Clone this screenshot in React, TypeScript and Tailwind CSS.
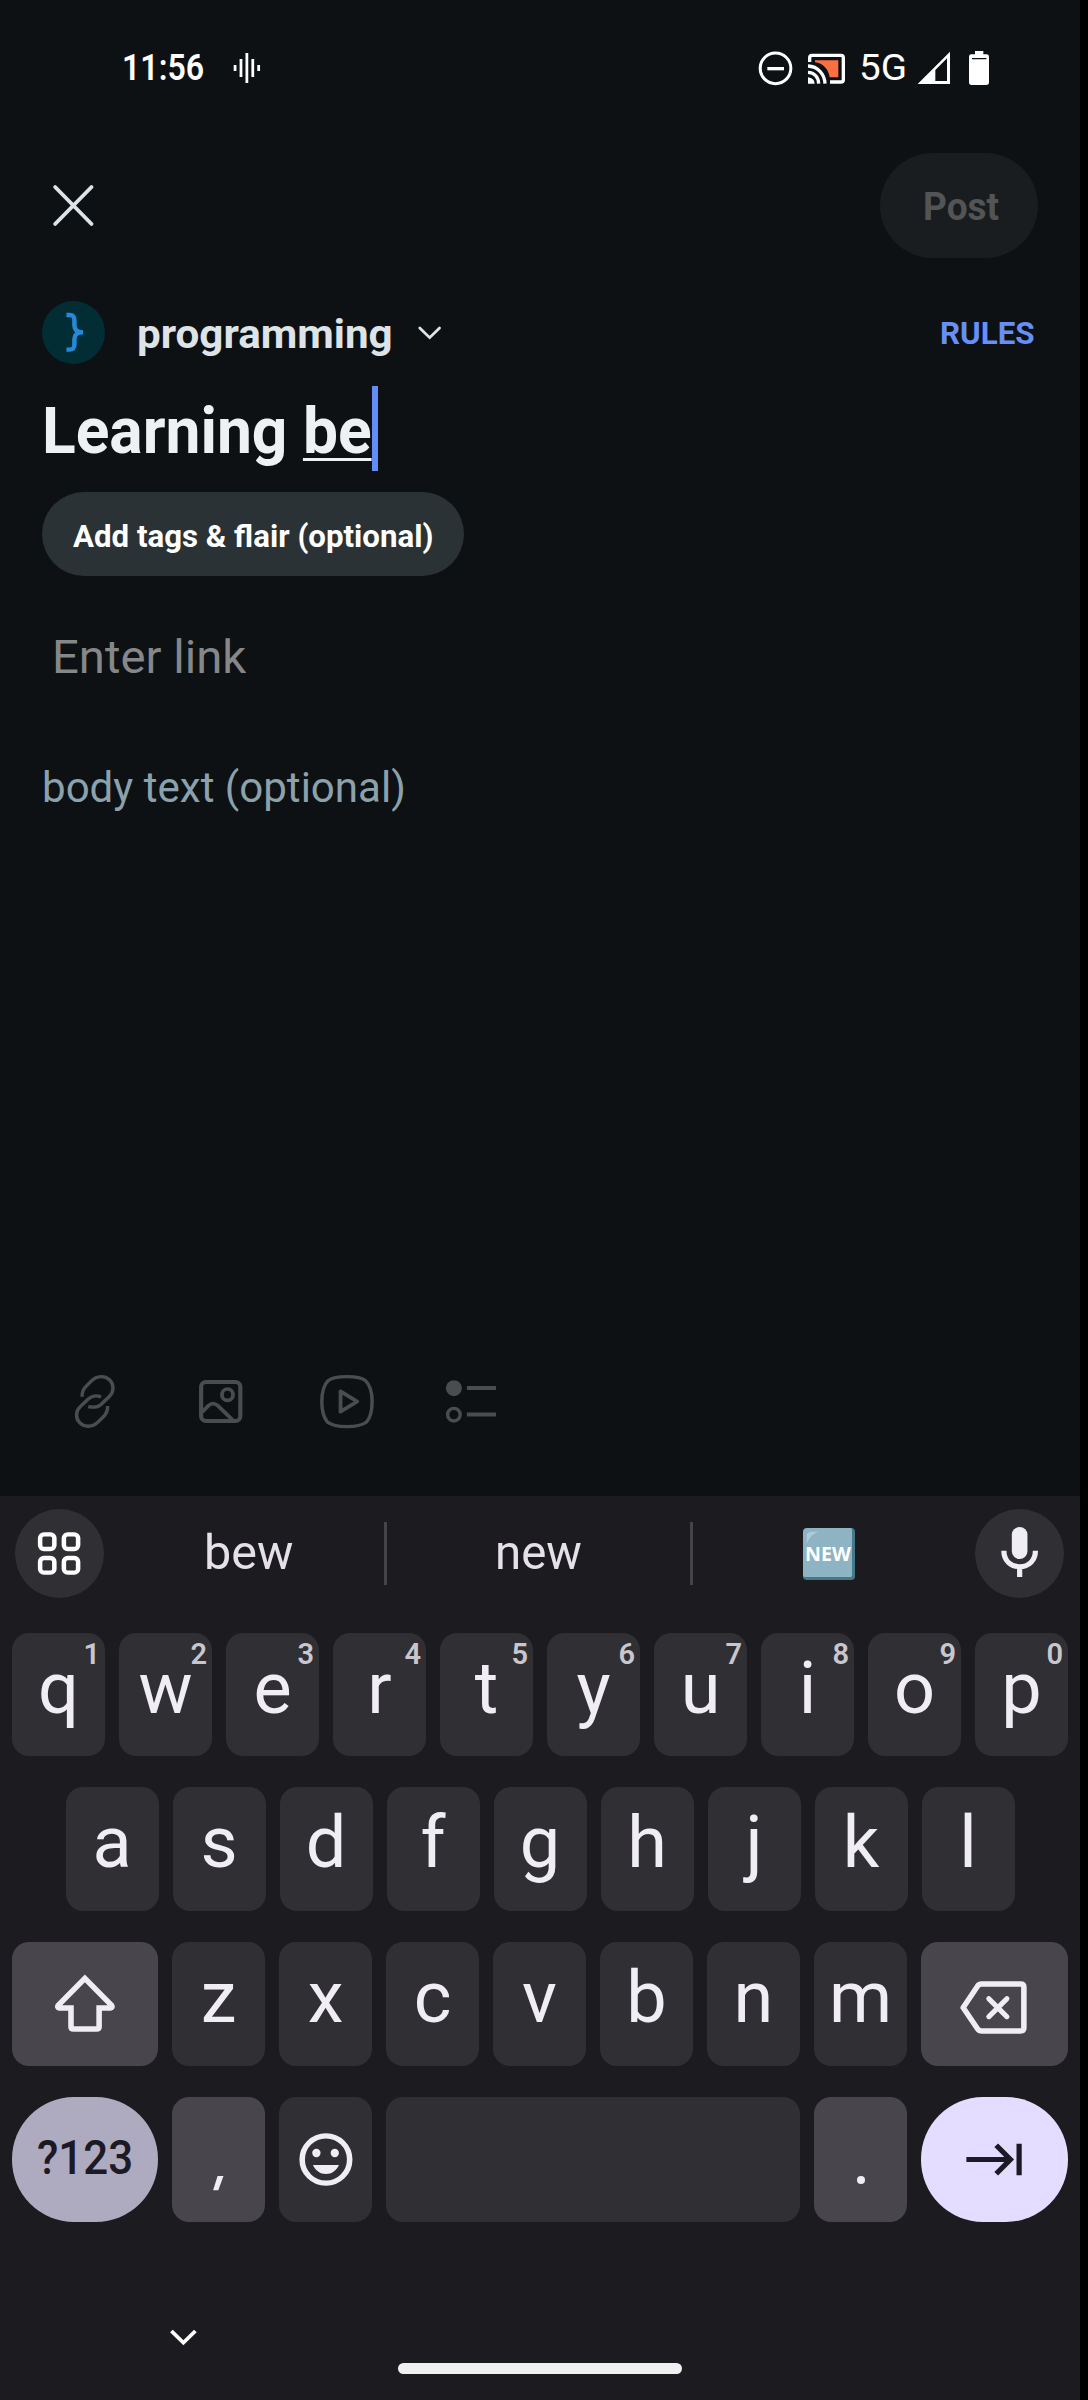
import React, { useLayoutEffect, useRef, useState } from "react";

const cx = (...parts: (string | undefined)[]) => parts.filter(Boolean).join(" ");

/** Single line of text scaled horizontally to fill exactly `w` pixels. */
function Fit({ w, className, children }: { w: number; className?: string; children: React.ReactNode }) {
  const ref = useRef<HTMLSpanElement>(null);
  const [scale, setScale] = useState(1);
  useLayoutEffect(() => {
    const measure = () => {
      const natural = ref.current?.offsetWidth;
      if (natural) setScale(w / natural);
    };
    measure();
    document.fonts?.ready.then(measure);
  }, [w]);
  return (
    <span className={cx("block shrink-0 whitespace-nowrap", className)} style={{ width: w }}>
      <span ref={ref} className="inline-block origin-left" style={{ transform: `scaleX(${scale})` }}>
        {children}
      </span>
    </span>
  );
}

/** Icon on a fine grid: three units per pixel down, `ux` units per pixel across. */
function Icon({ box, ux = 2.882, className, children }: { box: [number, number, number, number]; ux?: number; className?: string; children: React.ReactNode }) {
  return (
    <svg
      viewBox={box.join(" ")}
      width={box[2] / ux}
      height={box[3] / 3}
      preserveAspectRatio="none"
      fill="none"
      stroke="currentColor"
      className={cx("block shrink-0", className)}
    >
      {children}
    </svg>
  );
}

function StatusBar() {
  return (
    <div className="flex h-[136px] shrink-0 items-center pl-[122px] text-white">
      <Fit w={82} className="text-[36px] leading-[40px] font-semibold">11:56</Fit>
      <Icon box={[672, 156, 81, 96]} className="ml-[29px]">
        <path d="M678 195v18M695 177v54M712 159v90M729 177v54M746 195v18" strokeWidth="8" />
      </Icon>
      <Icon ux={3} box={[171, 150, 105, 105]} className="ml-[497px]">
        <ellipse cx="223.500" cy="202" rx="46" ry="46" strokeWidth="9" />
        <path d="M199 203h50" strokeWidth="10" />
      </Icon>
      <Icon ux={3} box={[318, 150, 117, 102]} className="ml-[14px]">
        <path d="M342 178H412V229H386C383 206 366 186 342 184Z" fill="#fb7043" stroke="none" />
        <path d="M326 183V170Q326 163 333 163H420Q427 163 427 170V236Q427 243 420 243H387" strokeWidth="10" />
        <path d="M321 229Q340 231 341 248H321Z" fill="currentColor" stroke="none" />
        <path d="M321 214C340 215 352 228 353 248M321 195C350 196 371 219 372 248" strokeWidth="10" />
      </Icon>
      <Fit w={48} className="ml-[13px] text-[37px] leading-[40px]">5G</Fit>
      <Icon ux={3} box={[648, 150, 102, 102]} className="ml-[10px]">
        <path d="M650 249L747 152V249ZM703 207V240H738V172Z" fill="currentColor" fillRule="evenodd" stroke="none" />
      </Icon>
      <Icon ux={3} box={[801, 150, 66, 105]} className="ml-[17px]">
        <path d="M822 150H847V160H857Q864 160 864 167V244Q864 252 856 252H812Q804 252 804 244V167Q804 160 811 160H822ZM813 171V175H856V171Z" fill="currentColor" fillRule="evenodd" stroke="none" />
      </Icon>
    </div>
  );
}

function TopBar() {
  return (
    <div className="flex h-[141px] shrink-0 items-start justify-between pt-[17px] pr-[42px] pl-[52px]">
      <Icon box={[150, 552, 124, 130]} className="mt-[31px] text-[#dde3e7]">
        <path d="M159 561L264 672M264 561L159 672" strokeWidth="11" strokeLinecap="round" />
      </Icon>
      <div className="flex h-[105px] w-[158px] items-center justify-center rounded-full bg-[#1a1d1f]">
        <Fit w={76} className="mt-[2px] ml-[3px] text-[38px] leading-[44px] font-bold text-[#525456]">Post</Fit>
      </div>
    </div>
  );
}

function Community() {
  return (
    <div className="flex h-[109px] shrink-0 items-start pt-[24px]">
      <div className="flex size-[63px] items-center justify-center rounded-full bg-[#022d35]">
        <Icon box={[183, 936, 60, 121]} className="ml-[2px]">
          <path d="M190 945H199C211 945 213 951 213 962V976C213 989 219 997 238 997C219 997 213 1005 213 1018V1032C213 1044 211 1049 199 1049H190" stroke="#2489d8" strokeWidth="13" />
        </Icon>
      </div>
      <Fit w={256} className="ml-[32px] text-[41px] leading-[67px] font-bold text-[#dde3e7]">programming</Fit>
      <Icon box={[1200, 975, 72, 48]} className="mt-[24px] ml-[24px] text-[#dde3e7]">
        <path d="M1208 984L1236.500 1013L1265 984" strokeWidth="8" strokeLinecap="round" />
      </Icon>
      <Fit w={95} className="mr-[5px] ml-auto text-[32px] leading-[65px] font-bold text-[#688ff6]">RULES</Fit>
    </div>
  );
}

function Composer() {
  return (
    <div className="flex flex-1 flex-col pr-[40px] pl-[42px]">
      <Community />
      <div className="flex h-[85px] shrink-0">
        <Fit w={330} className="text-[64px] leading-[92px] font-bold text-[#eef1f3]">
          Learning{" "}
          <span className="underline decoration-[3px] underline-offset-[5px] [text-decoration-skip-ink:none]">be</span>
        </Fit>
        <div className="h-[85px] w-[6px] bg-[#648cf6]" />
      </div>
      <div className="mt-[21px] flex h-[84px] w-[422px] shrink-0 items-center rounded-full bg-[#2a3235] pl-[31px]">
        <Fit w={360} className="mt-[4px] text-[32px] leading-[40px] font-bold text-white">Add tags &amp; flair (optional)</Fit>
      </div>
      <Fit w={194} className="mt-[51px] ml-[10px] text-[47px] leading-[60px] text-[#858788]">Enter link</Fit>
      <Fit w={364} className="mt-[70px] text-[43px] leading-[60px] text-[#8ba2ad]">body text (optional)</Fit>
    </div>
  );
}

function Attachments() {
  return (
    <div className="flex h-[188px] shrink-0 items-start pl-[73px] text-[#4a4d4f]">
      <Icon box={[210, 99, 126, 171]} className="mt-[65px]">
        <path d="M236 170C236 156 239 148 247 140L264 122C278 107 301 106 315 119C329 134 328 154 316 168L290 194C280 203 268 203 254 200" strokeWidth="10" />
        <path d="M291 171C277 165 264 168 254 177L231 200C217 214 217 235 229 248C242 262 264 262 278 250L297 231C307 221 310 212 310 198" strokeWidth="10" />
      </Icon>
      <Icon box={[570, 114, 132, 141]} className="mt-[70px] ml-[81px]">
        <rect x="579" y="126" width="113" height="117" rx="14" strokeWidth="12" />
        <ellipse cx="655" cy="164" rx="16" ry="17" strokeWidth="11" />
        <path d="M582 216L600 197Q613 185 627 197L673 243" strokeWidth="11" />
      </Icon>
      <Icon box={[915, 99, 168, 171]} className="mt-[65px] ml-[74px]">
        <path d="M998 110C1020 110 1042 113 1052 122C1068 138 1071 160 1071 185C1071 210 1068 230 1055 246C1042 256 1020 260 998 260C976 260 955 257 942 246C930 230 926 210 926 185C926 160 929 138 944 122C955 113 976 110 998 110Z" strokeWidth="10" />
        <path d="M980 154L1028 184.500L980 215Z" strokeWidth="11" strokeLinejoin="round" />
      </Icon>
      <Icon box={[1280, 114, 156, 141]} className="mt-[70px] ml-[68px]">
        <ellipse cx="1308.500" cy="144.500" rx="23" ry="24" fill="currentColor" stroke="none" />
        <ellipse cx="1308.500" cy="224" rx="18" ry="19" strokeWidth="10" />
        <path d="M1346 144H1430M1346 223.500H1430" strokeWidth="12" />
      </Icon>
    </div>
  );
}

function Suggestions() {
  return (
    <div className="flex h-[137px] shrink-0 items-start pt-[13px] pl-[15px]">
      <div className="flex size-[89px] items-center justify-center rounded-full bg-[#303034] text-white">
        <Icon box={[108, 573, 128, 135]}>
          <rect x="117" y="583" width="41" height="44" rx="11" strokeWidth="13" />
          <rect x="185.500" y="583" width="41" height="44" rx="11" strokeWidth="13" />
          <rect x="117" y="654" width="41" height="44" rx="11" strokeWidth="13" />
          <rect x="185.500" y="654" width="41" height="44" rx="11" strokeWidth="13" />
        </Icon>
      </div>
      <Fit w={89} className="ml-[100px] text-[49px] leading-[88px] text-[#e6e1e8]">bew</Fit>
      <div className="mt-[13px] ml-[91px] h-[63px] w-[3px] bg-[#454448]" />
      <Fit w={87} className="ml-[108px] text-[49px] leading-[88px] text-[#e6e1e8]">new</Fit>
      <div className="mt-[13px] ml-[108px] h-[63px] w-[3px] bg-[#454448]" />
      <div className="relative mt-[19px] ml-[110px] flex size-[52px] items-center justify-center rounded-[4px] border-r-[3px] border-b-[3px] border-[#45798a] bg-[#8eb3c3]">
        <Icon ux={3} box={[0, 0, 40, 40]} className="absolute top-[3px] left-[3px]">
          <path d="M2 38V16Q2 2 16 2H38Q12 10 2 38Z" fill="#aecbd7" stroke="none" />
        </Icon>
        <Fit w={46} className="relative mt-[2px] font-['Open_Sans'] text-[20px] leading-[26px] font-bold text-white">NEW</Fit>
      </div>
      <div className="ml-[120px] flex size-[89px] items-start justify-center rounded-full bg-[#303034] text-[#f1edf5]">
        <Icon box={[1311, 138, 120, 156]} className="mt-[17px]">
          <rect x="1348" y="141" width="45" height="96" rx="22.500" fill="currentColor" stroke="none" />
          <path d="M1325 212C1325 242 1345 260 1370.500 260C1396 260 1416 242 1416 212M1370.500 260V291" strokeWidth="15" />
        </Icon>
      </div>
    </div>
  );
}

const keyShape = "relative flex shrink-0 justify-center rounded-[17px]";

function Letter({ ch, hint }: { ch: string; hint?: string }) {
  return (
    <div className={cx(keyShape, "h-full w-[93px] bg-[#303034]")}>
      <span className="text-[72px] leading-[111px] text-[#f1edf5]">{ch}</span>
      {hint && (
        <span className="absolute top-[3px] right-[5px] text-[29px] leading-[36px] font-semibold text-[#c9c6cd]">
          {hint}
        </span>
      )}
    </div>
  );
}

function Keyboard() {
  return (
    <div className="flex h-[904px] shrink-0 flex-col bg-[#1c1b20]">
      <Suggestions />
      <div className="flex h-[123px] gap-[14px] pl-[12px]">
        {"qwertyuiop".split("").map((ch, i) => (
          <Letter key={ch} ch={ch} hint={String((i + 1) % 10)} />
        ))}
      </div>
      <div className="mt-[31px] flex h-[124px] gap-[14px] pl-[65.500px]">
        {"asdfghjkl".split("").map((ch) => (
          <Letter key={ch} ch={ch} />
        ))}
      </div>
      <div className="mt-[31px] flex h-[124px] gap-[14px] pl-[12px]">
        <div className={cx(keyShape, "w-[146px] bg-[#48454c] text-[#f1edf5]")}>
          <Icon box={[156, 162, 180, 180]} className="mt-[32px]">
            <path d="M245 175L168 256Q164 263 171 264H205V320Q205 327 212 327H279Q286 327 286 320V264H319Q326 263 322 256Z" strokeWidth="16" />
          </Icon>
        </div>
        {"zxcvbnm".split("").map((ch) => (
          <Letter key={ch} ch={ch} />
        ))}
        <div className={cx(keyShape, "w-[147px] items-center bg-[#48454c] text-[#f1edf5]")}>
          <Icon box={[1195, 655, 204, 170]} className="mt-[6px]">
            <path d="M1207 741L1248 677Q1252 670 1260 670H1372Q1382 670 1382 680V801Q1382 811 1372 811H1260Q1252 811 1248 804Z" strokeWidth="16" strokeLinejoin="round" />
            <path d="M1281 714L1333 768M1333 714L1281 768" strokeWidth="15" strokeLinecap="round" />
          </Icon>
        </div>
      </div>
      <div className="mt-[31px] flex h-[125px] gap-[14px] pl-[12px]">
        <div className="flex w-[146px] shrink-0 justify-center rounded-[62px] bg-[#aeaac0]">
          <Fit w={96} className="-ml-[1px] text-[48px] leading-[121px] font-medium text-[#1c1a24]">?123</Fit>
        </div>
        <div className={cx(keyShape, "w-[93px] bg-[#48454c]")}>
          <Icon box={[610, 765, 42, 50]} className="mt-[78px] text-[#f1edf5]">
            <path d="M629 768H646L631 811H616Z" fill="currentColor" stroke="none" />
          </Icon>
        </div>
        <div className={cx(keyShape, "w-[93px] items-center bg-[#303034] text-[#f1edf5]")}>
          <Icon box={[858, 636, 161, 165]}>
            <ellipse cx="938.500" cy="718.500" rx="68.500" ry="71" strokeWidth="16" />
            <g fill="currentColor" stroke="none">
              <ellipse cx="911" cy="699" rx="12" ry="12.500" />
              <ellipse cx="964" cy="699" rx="12" ry="12.500" />
              <path d="M901 735H976C969 752 955 762 938.500 762C922 762 908 752 901 735Z" />
            </g>
          </Icon>
        </div>
        <div className={cx(keyShape, "w-[414px] bg-[#303034]")} />
        <div className={cx(keyShape, "w-[93px] bg-[#48454c]")}>
          <div className="mt-[79px] size-[8px] rounded-full bg-[#f1edf5]" />
        </div>
        <div className="flex w-[147px] shrink-0 items-center justify-center rounded-[62px] bg-[#e4ddff] text-[#1c1a24]">
          <Icon box={[1215, 246, 168, 105]}>
            <path d="M1219 298.500H1345M1305 256L1346 298.500L1305 341M1371 251V346" strokeWidth="15" />
          </Icon>
        </div>
      </div>
      <Icon box={[486, 1224, 84, 57]} className="mt-[106px] ml-[168.500px] text-white">
        <path d="M493 1233L527.500 1268L562 1233" strokeWidth="11" />
      </Icon>
      <div className="mt-[16px] ml-[398px] h-[11px] w-[284px] rounded-full bg-[#f0f0f0]" />
    </div>
  );
}

export default function App() {
  return (
    <div className="h-[2400px] w-[1088px] overflow-hidden bg-black font-['Roboto',sans-serif]">
      <div className="flex h-full w-[1080px] flex-col bg-[#0d1114]">
        <StatusBar />
        <TopBar />
        <Composer />
        <Attachments />
        <Keyboard />
      </div>
    </div>
  );
}
